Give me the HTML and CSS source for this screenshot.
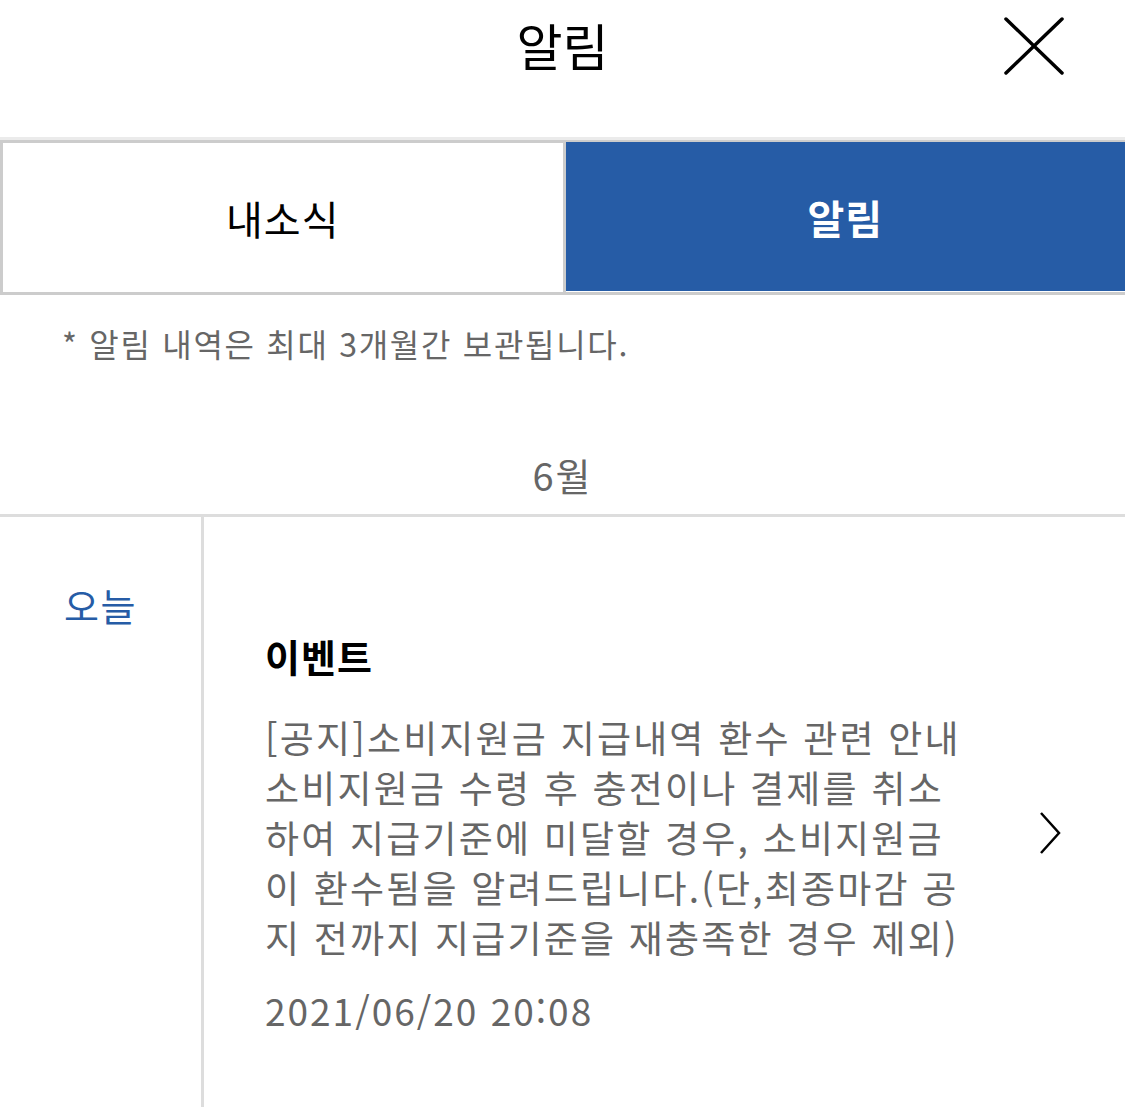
FILE: index.html
```html
<!DOCTYPE html>
<html lang="ko">

<head>
    <meta charset="UTF-8">
    <meta name="viewport" content="width=device-width, initial-scale=1.0">
    <title>알림</title>
    <link rel="stylesheet" href="styles.css">
</head>

<body>
    <header class="header">
        <span></span>
        <h1 class="header-title">알림</h1>
        <button class="close-btn" aria-label="닫기">
            <svg width="62" height="60" viewBox="0 0 62 60">
                <path d="M3 3 L59 57 M59 3 L3 57" stroke="#000" stroke-width="3.5" stroke-linecap="round" fill="none" />
            </svg>
        </button>
    </header>

    <nav class="tabs">
        <div class="tab">내소식</div>
        <div class="tab active">알림</div>
    </nav>

    <p class="notice">* 알림 내역은 최대 3개월간 보관됩니다.</p>

    <div class="month">6월</div>

    <!-- Notification list -->
    <section class="day-group">
        <div class="day-label">오늘</div>
        <div class="day-items">
            <a class="item" href="#">
                <div class="item-body">
                    <h3 class="item-type">이벤트</h3>
                    <p class="item-text">[공지]소비지원금 지급내역 환수 관련 안내<br>소비지원금 수령 후 충전이나 결제를 취소하여 지급기준에 미달할 경우, 소비지원금이 환수됨을 알려드립니다.(단,최종마감 공지 전까지 지급기준을 재충족한 경우 제외)</p>
                    <div class="item-date">2021/06/20 20:08</div>
                </div>
                <svg class="chevron" width="24" height="44" viewBox="0 0 24 44">
                    <path d="M3 2 L21 22 L3 42" stroke="#000" stroke-width="2.5" fill="none" />
                </svg>
            </a>
        </div>
    </section>
</body>

</html>
```

FILE: styles.css
```css
body {
    margin: 0;
    font-family: "Noto Sans CJK KR", "Noto Sans", sans-serif;
    background: #fff;
    color: #000;
}

.header {
    height: 137px;
    display: grid;
    grid-template-columns: 1fr auto 1fr;
    align-items: start;
    border-bottom: 3px solid #ebebeb;
}

.header-title {
    margin: 0;
    font-size: 50px;
    font-weight: 400;
    line-height: 88px;
}

.close-btn {
    justify-self: end;
    margin: 16px 60px 0 0;
    padding: 0;
    border: none;
    background: none;
    cursor: pointer;
}

.close-btn svg {
    display: block;
}

.tabs {
    display: flex;
    border-top: 3px solid #ccc;
    border-bottom: 3px solid #ccc;
}

.tab {
    flex: 1;
    height: 149px;
    display: flex;
    align-items: center;
    justify-content: center;
    font-size: 40px;
    letter-spacing: 1px;
}

.tab:first-child {
    border-left: 3px solid #ccc;
    border-right: 3px solid #ccc;
}

.tab.active {
    background: #265ca6;
    color: #fff;
    font-weight: 700;
    margin-top: -1px;
}

.notice {
    margin: 0;
    padding: 24px 0 0 62px;
    font-size: 32px;
    line-height: 48px;
    letter-spacing: 1.7px;
    color: #666;
}

.month {
    margin-top: 83px;
    padding-bottom: 14px;
    text-align: center;
    font-size: 38px;
    line-height: 50px;
    letter-spacing: 2px;
    color: #666;
    border-bottom: 3px solid #ddd;
}

.day-group {
    display: grid;
    grid-template-columns: 204px 1fr;
    min-height: 600px;
}

.day-label {
    padding-top: 63px;
    text-align: center;
    font-size: 38px;
    line-height: 50px;
    letter-spacing: 1.5px;
    color: #265ca6;
    border-right: 3px solid #ddd;
}

.item {
    display: flex;
    align-items: center;
    padding: 114px 63px 0 61px;
    color: inherit;
    text-decoration: none;
}

.item-body {
    width: 700px;
}

.item-type {
    margin: 0;
    font-size: 38px;
    font-weight: 700;
    line-height: 50px;
    letter-spacing: 1px;
}

.item-text {
    margin: 31px 0 0;
    font-size: 37px;
    line-height: 50px;
    letter-spacing: 2.2px;
    color: #666;
}

.item-date {
    margin-top: 23px;
    font-size: 37px;
    line-height: 50px;
    letter-spacing: 2px;
    color: #666;
}

.chevron {
    margin-left: auto;
    flex-shrink: 0;
}
```
